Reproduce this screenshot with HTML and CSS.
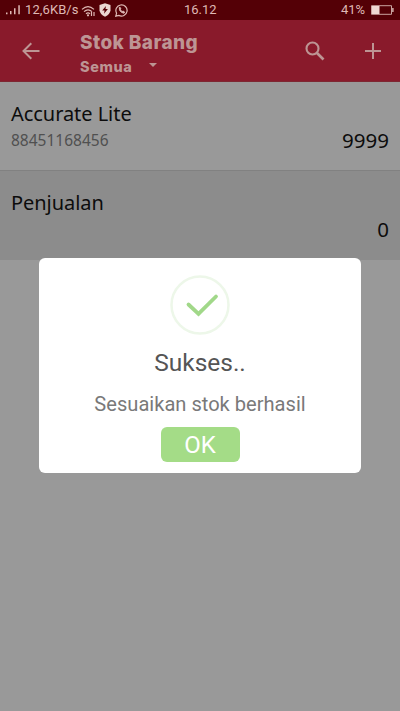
FILE: index.html
```html
<!DOCTYPE html>
<html lang="id">
<head>
<meta charset="utf-8">
<title>Stok Barang</title>
<link rel="stylesheet" href="styles.css">
</head>
<body>
<div class="status">
  <svg class="signal" width="15" height="10" viewBox="0 0 15 10" fill="currentColor"><path d="M0 7.600h1.500v1.600H0zM4 6h1.500v3.200H4zM8 3.300h1.500v5.900H8zM12.300.3h1.500v8.900h-1.500z"/></svg>
  <span class="speed">12,6KB/s</span>
  <svg class="wifi" width="15" height="12" viewBox="0 0 15 12" fill="none" stroke="currentColor" stroke-width="1.200"><path d="M1 4.400Q7 -1 13 4.400M3 6.600Q7 3 11 6.600M5 8.700Q7 7 9 8.700M10.500 7v4M13 11V7"/><circle cx="7" cy="10.300" r=".5"/></svg>
  <svg class="shield" width="12" height="14" viewBox="0 0 12 14"><path fill="currentColor" d="M6 .2 11.500 2v5.200Q11 11.500 6 13.800 1 11.500.5 7.200V2z"/><path fill="#560006" d="M6.900 2.900 3.200 7.500h2.400L5 10.800l3.900-4.900H6.500z"/></svg>
  <svg class="chat" width="13" height="13" viewBox="0 0 13 13" fill="none" stroke="currentColor"><path stroke-width="1.200" d="M.8 12.200 1.600 9.200A5.600 5.600 0 1 1 3.800 11.400z"/><path stroke-width="1" fill="currentColor" d="M4.300 3.500Q4 8.300 9 9.200L9.600 8 8 7 7.200 7.600Q5.900 7 5.400 5.700L5.800 4.800 5.100 3.300z"/></svg>
  <span class="clock">16.12</span>
  <span class="percent">41%</span>
  <svg class="battery" width="23" height="10" viewBox="0 0 23 10"><path fill="none" stroke="currentColor" stroke-opacity=".75" d="M.5.700h20v8.600H.5z"/><path fill="currentColor" d="M1 1h7.500v8H1zM21.300 3h1.200v4h-1.200z"/></svg>
</div>
<header class="bar">
  <svg class="back" width="18" height="18" viewBox="0 0 18 18" fill="none" stroke="currentColor" stroke-width="2"><path d="M17.500 9H1.700M9.300 1.200 1.500 9l7.800 7.800"/></svg>
  <div class="titles">
    <h1>Stok Barang</h1>
    <div class="filter"><span>Semua</span><svg width="8" height="4" viewBox="0 0 8 4"><path fill="currentColor" d="M0 0h8L4 4z"/></svg></div>
  </div>
  <svg class="search" width="20" height="20" viewBox="0 0 20 20" fill="none" stroke="currentColor"><circle cx="7.500" cy="7.500" r="6" stroke-width="2.100"/><path stroke-width="2.700" d="m12 12 6.500 6.500"/></svg>
  <svg class="plus" width="16" height="16" viewBox="0 0 16 16" stroke="currentColor" stroke-width="2"><path d="M8 0v16M0 8h16"/></svg>
</header>
<main>
  <section class="item">
    <div class="name">Accurate Lite</div>
    <div class="code">88451168456</div>
    <div class="count">9999</div>
  </section>
  <section class="item item-alt">
    <div class="name">Penjualan</div>
    <div class="count">0</div>
  </section>
</main>
<div class="dialog">
  <svg class="check" width="60" height="60" viewBox="0 0 60 60" fill="none"><circle cx="30" cy="30" r="28.500" stroke="#edf7e9" stroke-width="2.500"/><path d="M18.500 29.500 28.500 38.800 46 21.500" stroke="#a1d889" stroke-width="3.800" stroke-linecap="round"/></svg>
  <h2>Sukses..</h2>
  <p>Sesuaikan stok berhasil</p>
  <button>OK</button>
</div>
</body>
</html>
```

FILE: styles.css
```css
* { box-sizing: border-box; }
body {
  margin: 0;
  width: 400px;
  height: 711px;
  overflow: hidden;
  background: #999;
  font-family: "Noto Sans", sans-serif;
  color: #0c0c0c;
}
svg { display: block; flex: none; }
.status {
  height: 20px;
  display: flex;
  align-items: center;
  background: #540006;
  color: #dfb9b5;
  font: 13px/20px Roboto, sans-serif;
  padding-left: 6px;
}
.speed { width: 56px; margin-left: 4px; letter-spacing: 0.1px; white-space: nowrap; }
.wifi { margin-top: 1px; }
.shield { margin-left: 3px; color: #ecd7d2; }
.chat { margin-left: 4px; }
.clock { margin-left: 56px; width: 39px; }
.percent { margin-left: 118px; width: 30px; }
.battery { color: #efd8d2; }
.bar {
  height: 62px;
  display: flex;
  align-items: center;
  background: #891a2b;
  border-bottom: 1px solid #7e2732;
  color: #bd9594;
  padding-left: 22px;
}
.titles { width: 194px; margin-left: 40px; padding-top: 7px; font-family: Inter, sans-serif; font-weight: 800; }
h1 { margin: 0; font-size: 19px; line-height: 25px; font-weight: 800; letter-spacing: 0.4px; white-space: nowrap; }
.filter { display: flex; align-items: center; font-size: 14.5px; line-height: 23px; letter-spacing: 0.6px; }
.filter span { width: 69px; }
.filter svg { margin-bottom: 3px; }
.search { margin-left: 31px; }
.plus { margin-left: 40px; }
.item { position: relative; height: 89px; padding: 18px 11px 0; border-bottom: 1px solid #818181; }
.item-alt { background: #8c8c8c; border-bottom: 0; }
.name { font-size: 20px; line-height: 27px; letter-spacing: -0.05px; }
.code { font-size: 15.500px; line-height: 27px; color: #505050; }
.count { position: absolute; right: 11px; bottom: 16px; font-size: 20.500px; line-height: 28px; }
.item-alt .count { bottom: 17px; }
.dialog {
  position: absolute;
  left: 39px;
  top: 258px;
  width: 322px;
  height: 214.5px;
  display: flex;
  flex-direction: column;
  align-items: center;
  padding-top: 17px;
  border-radius: 6px;
  background: #fff;
  font-family: Roboto, sans-serif;
}
h2 { margin: 13px 0 0; font-size: 24.5px; line-height: 30px; font-weight: 400; color: #555; }
p { margin: 14px 0 0; font-size: 20.100px; line-height: 24px; color: #797979; }
button {
  width: 79px;
  height: 35px;
  margin-top: 11px;
  padding: 2px 0 0;
  border: 0;
  border-radius: 6px;
  background: #a4dc87;
  color: #fff;
  font: 24px/33px Roboto, sans-serif;
}
```
